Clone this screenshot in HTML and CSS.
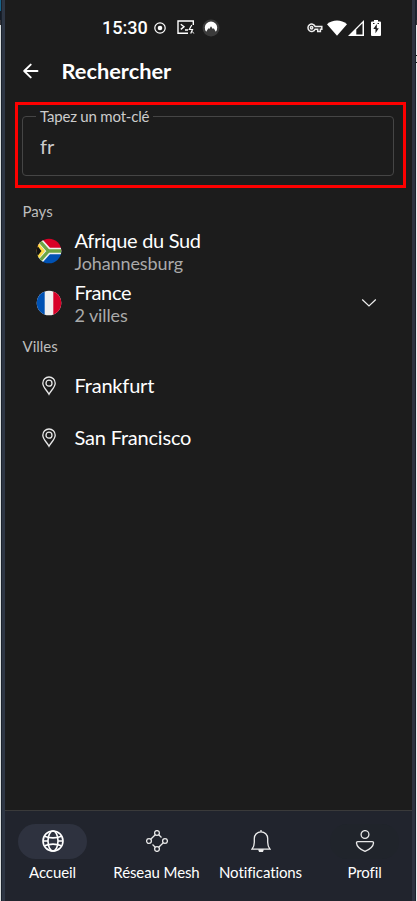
FILE: index.html
```html
<!DOCTYPE html>
<html lang="fr">
<head>
<meta charset="utf-8">
<title>Rechercher</title>
<link rel="stylesheet" href="styles.css">
</head>
<body>
<div class="frame">
  <div class="edge edge-left"></div>
  <main class="screen">
    <div class="status">
      <span class="clock">15:30</span>
      <svg class="s-record" width="12" height="12" viewBox="0 0 12 12"><circle cx="6" cy="6" r="5.2" fill="none" stroke="#fff" stroke-width="1.2"/><circle cx="6" cy="6" r="2.3" fill="#fff"/></svg>
      <svg class="s-term" width="18" height="15" viewBox="0 0 18 15" fill="none" stroke="#fff" stroke-width="1.4"><path d="M11 13.3H1V1h15.300v4M3.8 4.2l3.2 2.6-3.2 2.6M8 10h3"/><path d="M14.8 5l-2.500 4.500h3.200l-1.800 4" stroke-width="1.200"/><path d="M15.300 11.500l1.500 2" stroke-width="1"/></svg>
      <svg class="s-vpn" width="18" height="18" viewBox="0 0 18 18"><circle cx="9" cy="9" r="8.500" fill="#3b3b3b"/><path d="M4.200 12.700a6.200 6.200 0 1 1 9.600 0l-2-3.400-1 .8L9 7.200l-1.700 2.900-.9-.8z" fill="#fff"/></svg>
      <span class="grow"></span>
      <svg class="s-key" width="16" height="10" viewBox="0 0 16 10" fill="none" stroke="#eee" stroke-width="1.5"><path d="M8.1 3.4h6.7v2.8h-1.4v2.2h-2.7V6.2H8.1A3.7 3.7 0 1 1 8.1 3.4z"/><circle cx="4.6" cy="4.8" r="1.2"/></svg>
      <svg class="s-wifi" width="20" height="16" viewBox="0 0 20 16"><path d="M0 4.2C5.600-.8 14.400-.8 20 4.200L10 15.800z" fill="#fff"/></svg>
      <svg class="s-cell" width="16" height="16" viewBox="0 0 16 16"><path d="M0 16L16 0v16z" fill="#fff"/><path d="M8.300 9.400L14.500 3.300v11.200H8.300z" fill="#1c1c1c"/></svg>
      <svg width="10" height="16" viewBox="0 0 10 16"><path d="M1 1.500h2V0h4v1.500h2a1 1 0 0 1 1 1V15a1 1 0 0 1-1 1H1a1 1 0 0 1-1-1V2.500a1 1 0 0 1 1-1z" fill="#fff"/><path d="M5.800 4L2.300 9h2.200v4.200L7.800 8.200H5.800zM2 3h1.500v1H2zM6.500 3H8v1H6.500z" fill="#1c1c1c"/></svg>
    </div>

    <header class="bar">
      <svg width="16" height="16" viewBox="0 0 16 16" fill="none" stroke="#fff" stroke-width="1.900" stroke-linecap="round" stroke-linejoin="round"><path d="M14.500 8H1.500M7.700 1.600L1.200 8l6.500 6.400"/></svg>
      <h1>Rechercher</h1>
    </header>

    <section class="highlight">
      <fieldset class="field">
        <legend>Tapez un mot-clé</legend>
        <div class="value">fr</div>
      </fieldset>
    </section>

    <h2 class="group">Pays</h2>
    <div class="row">
      <svg class="flag" width="26" height="26" viewBox="0 0 26 26">
        <defs><clipPath id="disc"><circle cx="13" cy="13" r="12.300"/></clipPath></defs>
        <g clip-path="url(#disc)">
          <path fill="#d80027" d="M0 0h26v13H0z"/><path fill="#0052b4" d="M0 13h26v13H0z"/>
          <path d="M0-1l12.500 14H26M0 27l12.500-14" fill="none" stroke="#f0f0f0" stroke-width="6.400"/>
          <path fill="#ffda44" d="M0 2l9 11L0 24z"/><path fill="#111" d="M0 6L5.500 13 0 20z"/>
          <path d="M0-1l12.500 14H26M0 27l12.500-14" fill="none" stroke="#6da544" stroke-width="3.300"/>
        </g>
      </svg>
      <div class="text"><div class="name">Afrique du Sud</div><div class="sub">Johannesburg</div></div>
    </div>
    <div class="row">
      <svg class="flag" width="26" height="26" viewBox="0 0 26 26"><g clip-path="url(#disc)"><path fill="#f0f0f0" d="M0 0h26v26H0z"/><path fill="#0052b4" d="M0 0h8.700v26H0z"/><path fill="#d80027" d="M17.300 0H26v26h-8.700z"/></g></svg>
      <div class="text"><div class="name">France</div><div class="sub">2 villes</div></div>
      <svg class="chevron" width="16" height="10" viewBox="0 0 16 10" fill="none" stroke="#eee" stroke-width="1.200"><path d="M1.200 1.500L8 8l6.800-6.500"/></svg>
    </div>
    <h2 class="group group-cities">Villes</h2>
    <div class="row">
      <svg class="pin" width="14" height="20" viewBox="0 0 14 20" fill="none" stroke="#e8e8e8" stroke-width="1.300"><path d="M7 18.300C5.500 15 .8 11.300.8 7.200a6.200 6.200 0 0 1 12.400 0C13.200 11.300 8.500 15 7 18.300z"/><circle cx="7" cy="7.200" r="3"/></svg>
      <div class="name">Frankfurt</div>
    </div>
    <div class="row">
      <svg class="pin" width="14" height="20" viewBox="0 0 14 20" fill="none" stroke="#e8e8e8" stroke-width="1.300"><path d="M7 18.300C5.500 15 .8 11.300.8 7.200a6.200 6.200 0 0 1 12.400 0C13.200 11.300 8.500 15 7 18.300z"/><circle cx="7" cy="7.200" r="3"/></svg>
      <div class="name">San Francisco</div>
    </div>

    <nav class="tabs">
      <div class="tab active">
        <span class="pill"><svg width="22" height="22" viewBox="0 0 22 22" fill="none" stroke="#fff" stroke-width="1.600"><circle cx="11" cy="11" r="10"/><ellipse cx="11" cy="11" rx="5" ry="10"/><path d="M2.400 6.200c5 2 12.200 2 17.200 0M2.400 15.800c5-2 12.200-2 17.200 0M1 11h5M16 11h5"/></svg></span>
        <span>Accueil</span>
      </div>
      <div class="tab">
        <span class="pill"><svg width="22" height="22" viewBox="0 0 22 22" fill="none" stroke="#e8e8e8" stroke-width="1.300"><circle cx="11" cy="3" r="2.400"/><circle cx="19" cy="11" r="2.400"/><circle cx="11" cy="19" r="2.400"/><circle cx="3" cy="11" r="2.400"/><path d="M4.700 9.300l4.600-4.600M12.700 4.700l2.800 2.800M17.300 12.700l-4.600 4.600M9.300 17.300l-2.800-2.800"/></svg></span>
        <span>Réseau Mesh</span>
      </div>
      <div class="tab">
        <span class="pill"><svg width="20" height="22" viewBox="0 0 20 22" fill="none" stroke="#eee" stroke-width="1.300"><path d="M1 19.200c2-2.300 2.300-3.700 2.300-7V8.500a6.700 6.700 0 0 1 13.400 0v3.700c0 3.300.3 4.700 2.300 7z"/><path d="M8 19.800a2 2 0 0 0 4 0z" fill="#eee"/><path d="M10 0v1.800"/></svg></span>
        <span>Notifications</span>
      </div>
      <div class="tab">
        <span class="pill pill-dim"><svg width="20" height="22" viewBox="0 0 20 22" fill="none" stroke="#e8e8e8" stroke-width="1.300"><circle cx="10" cy="4.500" r="3.900"/><path d="M2.800 11.600h14.400a1.300 1.300 0 0 1 1.300 1.500C18.100 17.600 14.300 19.600 10 21.300 5.700 19.600 1.900 17.600 1.500 13.100a1.300 1.300 0 0 1 1.300-1.500z"/></svg></span>
        <span>Profil</span>
      </div>
    </nav>
  </main>
  <div class="edge edge-right"></div>
</div>
</body>
</html>
```
FILE: styles.css
```css
* { box-sizing: border-box; }
body { margin: 0; background: #1c1c1c; color: #fff; font-family: Lato, sans-serif; }
svg { display: block; flex: none; }
.frame { display: grid; grid-template-columns: 5px 407px 5px; height: 901px; overflow: hidden; }
.edge-left { background: linear-gradient(90deg, transparent 1px, #19212b 1px 2px, #2e3644 2px), linear-gradient(#17638a 0 11px, #141a24 11px 20px, #35353a 20px 25px, #d9dddd 25px); }
.edge-right { background: linear-gradient(90deg, #2e3240 3px, #1b202b 3px 4px, transparent 4px), linear-gradient(#202633 0 20px, #35353a 20px 25px, #e9e9ed 25px 55px, #222 55px 56px, #ddd 56px 62px, #222 62px 63px, #e9e9ed 63px); }
.screen { display: flex; flex-direction: column; min-width: 0; background: #1c1c1c; }

.status { display: flex; align-items: center; height: 55px; padding: 0 31px 0 97px; }
.clock { width: 45px; font: 500 18px/20px Roboto, sans-serif; white-space: nowrap; }
.s-record { margin-left: 7px; }
.s-term { margin-left: 11px; }
.s-vpn { margin-left: 7px; }
.grow { flex: 1; }
.s-key { margin-right: 4px; }
.s-wifi { margin-right: 1px; }
.s-cell { margin-right: 7px; }

.bar { display: flex; align-items: center; height: 32px; padding-left: 18px; }
.bar h1 { margin: 0 0 0 22.500px; font-size: 21.800px; line-height: 26px; font-weight: 700; }

.highlight { height: 86px; margin: 15px 6px 0 10px; padding: 2px 9px 0 4px; border: 3px solid #fd0000; }
.field { height: 69px; margin: 0; padding: 0 0 0 17px; border: 1px solid #454545; border-radius: 4px; min-width: 0; }
.field legend { margin-left: -4px; padding: 0 4px; font-size: 15px; line-height: 18px; letter-spacing: -0.200px; color: #ccc; }
.value { margin-top: 9px; font-size: 20px; line-height: 24px; color: #ccc; }

.group { height: 37px; margin: 0; padding: 14px 0 0 17.500px; font-size: 15px; line-height: 18px; font-weight: 400; color: #bdbdbd; }
.group-cities { padding-top: 8px; height: 30px; }
.row { display: flex; align-items: center; height: 52px; padding: 0 35px 0 31px; }
.flag { margin-right: 12.500px; }
.pin { margin: 2px 19px 0 5.500px; }
.name { font-size: 20px; line-height: 24px; letter-spacing: -0.320px; white-space: nowrap; }
.pin + .name { letter-spacing: -0.200px; }
.sub { font-size: 18px; line-height: 22px; letter-spacing: -0.100px; color: #aaa; }
.chevron { margin-left: auto; }

.tabs { display: grid; grid-template-columns: repeat(4, 104px); height: 91px; margin-top: auto; border-top: 1px solid #3a3a3a; background: #21242d; justify-content: center; overflow: hidden; }
.tab { display: flex; flex-direction: column; align-items: center; padding-top: 13px; font-size: 15px; line-height: 18px; letter-spacing: -0.100px; white-space: nowrap; }
.pill { display: grid; place-items: center; width: 69px; height: 35px; margin-bottom: 4px; border-radius: 18px; }
.tab svg { margin: 0 0 1px; }
.active .pill { background: #2e323f; }
.pill-dim { background: #20242b; }
```
